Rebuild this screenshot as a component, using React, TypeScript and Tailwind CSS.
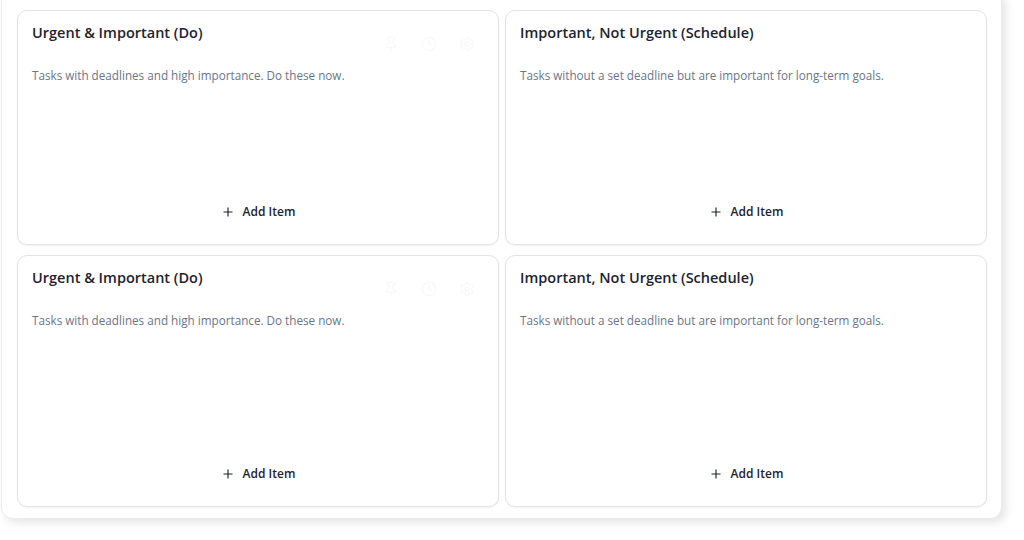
import { Clock, Pin, Plus, Settings } from "lucide-react";

type Quadrant = {
  title: string;
  description: string;
  ghostIcons?: boolean;
};

const quadrants: Array<Quadrant & { height: string }> = [
  {
    title: "Urgent & Important (Do)",
    description: "Tasks with deadlines and high importance. Do these now.",
    ghostIcons: true,
    height: "h-[235px]",
  },
  {
    title: "Important, Not Urgent (Schedule)",
    description:
      "Tasks without a set deadline but are important for long-term goals.",
    height: "h-[235px]",
  },
  {
    title: "Urgent & Important (Do)",
    description: "Tasks with deadlines and high importance. Do these now.",
    ghostIcons: true,
    height: "h-[252px]",
  },
  {
    title: "Important, Not Urgent (Schedule)",
    description:
      "Tasks without a set deadline but are important for long-term goals.",
    height: "h-[252px]",
  },
];

const QuadrantCard = ({
  title,
  description,
  ghostIcons,
  height,
}: Quadrant & { height: string }) => (
  <div
    className={`relative flex flex-col rounded-[10px] border border-[#e4e4e7] bg-white px-[14px] shadow-[0_1px_2px_rgba(0,0,0,0.06)] ${height}`}
  >
    <h2 className="mt-[12px] text-[14.5px] font-semibold leading-[20px] text-[#1e2330]">
      {title}
    </h2>
    <p className="mt-[24px] text-[11.7px] leading-[16px] text-[#6b7589]">
      {description}
    </p>
    {ghostIcons && (
      <div className="absolute left-[365px] top-[25px] flex gap-[22px] text-[#1e2330] opacity-[0.025]">
        <Pin size={16} />
        <Clock size={16} />
        <Settings size={16} />
      </div>
    )}
    <button className="mt-auto mb-[23px] flex items-center justify-center gap-[8px] self-center text-[12px] font-semibold text-[#1e2330]">
      <Plus size={14} strokeWidth={2} />
      Add Item
    </button>
  </div>
);

export default function App() {
  return (
    <div
      className="h-[540px] w-[1024px] overflow-hidden bg-white"
      style={{ fontFamily: '"Open Sans", "Noto Sans", sans-serif' }}
    >
      <div className="ml-[1px] mt-[-10px] w-[1001px] rounded-[12px] border border-[#ececec] bg-white pb-[11px] pl-[15px] pt-[19px] shadow-[4px_4px_8px_rgba(0,0,0,0.10)]">
        <div className="grid grid-cols-[482px_482px] gap-x-[6px] gap-y-[10px]">
          {quadrants.map((q, i) => (
            <QuadrantCard key={i} {...q} />
          ))}
        </div>
      </div>
    </div>
  );
}
